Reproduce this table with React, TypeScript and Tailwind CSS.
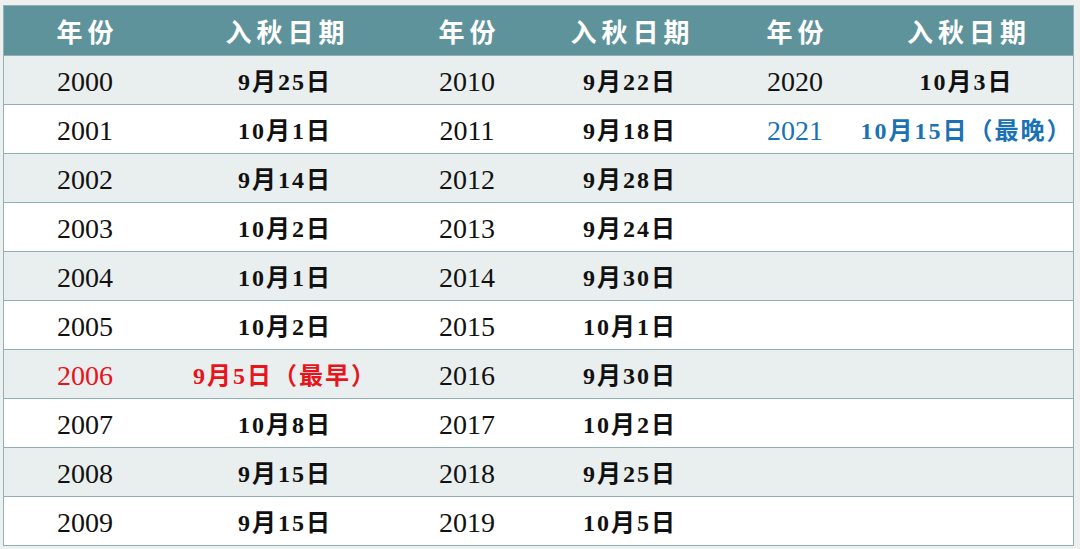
const rows: [string, string, string, string, string, string][] = [
  ['2000', '9月25日', '2010', '9月22日', '2020', '10月3日'],
  ['2001', '10月1日', '2011', '9月18日', '2021', '10月15日（最晚）'],
  ['2002', '9月14日', '2012', '9月28日', '', ''],
  ['2003', '10月2日', '2013', '9月24日', '', ''],
  ['2004', '10月1日', '2014', '9月30日', '', ''],
  ['2005', '10月2日', '2015', '10月1日', '', ''],
  ['2006', '9月5日（最早）', '2016', '9月30日', '', ''],
  ['2007', '10月8日', '2017', '10月2日', '', ''],
  ['2008', '9月15日', '2018', '9月25日', '', ''],
  ['2009', '9月15日', '2019', '10月5日', '', ''],
];

const grid = 'grid grid-cols-[162px_238px_126px_200px_130px_1fr]';
const yearFont = "font-['Liberation_Serif','Noto_Sans_CJK_SC',serif] text-[28px] pt-[4px]";
const dateFont = "font-['Liberation_Serif','Noto_Sans_CJK_SC',serif] text-[24px] font-bold tracking-[2px] pt-[3px]";

function color(year: string) {
  if (year === '2006') return 'text-[#e8141c]';
  if (year === '2021') return 'text-[#1a72b5]';
  return 'text-[#111111]';
}

export default function App() {
  return (
    <div className="w-full h-[549px] bg-[#eef0f0] pt-[5px] pl-[3px] pr-[6px]">
      <div className="border border-[#8fb0b4] bg-white">
        {/* header */}
        <div className={`${grid} h-[49px] bg-[#5f939b] text-white font-['Noto_Sans_CJK_SC',sans-serif] text-[26px] font-bold tracking-[5px]`}>
          {['年份', '入秋日期', '年份', '入秋日期', '年份', '入秋日期'].map((h, i) => (
            <div key={i} className="flex items-center justify-center pl-[5px]">
              {h}
            </div>
          ))}
        </div>

        {rows.map((r, i) => (
          <div
            key={i}
            className={`${grid} h-[49px] border-t border-[#8fb0b4] ${i % 2 === 0 ? 'bg-[#e9eeee]' : 'bg-white'}`}
          >
            {r.map((cell, j) => {
              const year = j % 2 === 0 ? cell : r[j - 1];
              return (
                <div
                  key={j}
                  className={`flex items-center justify-center leading-none ${j % 2 === 0 ? yearFont : dateFont} ${color(year)}`}
                >
                  {cell}
                </div>
              );
            })}
          </div>
        ))}
      </div>
    </div>
  );
}
